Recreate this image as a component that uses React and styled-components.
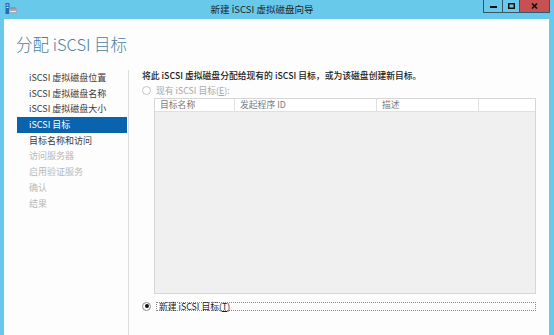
import styled, { createGlobalStyle } from "styled-components";

const GlobalStyle = createGlobalStyle`
  html, body {
    margin: 0;
    padding: 0;
    background: #68c9eb;
  }
  * {
    box-sizing: border-box;
  }
`;

const FONT = `"Noto Sans CJK SC", "Noto Sans", sans-serif`;

const Window = styled.div`
  width: 554px;
  height: 335px;
  background: #68c9eb;
  display: flex;
  flex-direction: column;
  padding: 0 5px 0 4px;
  font-family: ${FONT};
  overflow: hidden;
`;

const TitleBar = styled.div`
  height: 19px;
  display: flex;
  align-items: flex-start;
  flex-shrink: 0;
`;

const AppIcon = styled.svg`
  margin-top: 3px;
  margin-left: 1px;
  flex-shrink: 0;
`;

const Title = styled.div`
  flex: 1;
  text-align: center;
  padding-left: 24px;
  font-size: 9.5px;
  line-height: 19px;
  color: #1f1f1f;
`;

const WindowButtons = styled.div`
  display: flex;
  height: 13px;
  border: 1px solid #35576a;
  border-top: none;
  margin-right: -1px;
`;

const WinButton = styled.div`
  width: ${(p) => p.$w}px;
  height: 100%;
  display: flex;
  align-items: center;
  justify-content: center;
  background: ${(p) => (p.$close ? "#c75050" : "transparent")};
  border-left: ${(p) => (p.$first ? "none" : "1px solid #35576a")};
  color: #111;
`;

const Client = styled.div`
  flex: 1;
  background: #fdfdfd;
  display: flex;
  flex-direction: column;
`;

const Heading = styled.div`
  height: 51px;
  padding: 14px 0 0 12px;
  font-size: 16.5px;
  line-height: 22px;
  color: #4b7fa3;
  font-weight: 300;
`;

const Body = styled.div`
  flex: 1;
  display: flex;
`;

const Nav = styled.div`
  width: 125px;
  padding: 0 1px 0 13px;
  border-right: 1px solid #dcdcdc;
  display: flex;
  flex-direction: column;
`;

const NavItem = styled.div`
  height: 15.7px;
  line-height: 15.7px;
  padding-left: 12px;
  font-size: 9px;
  white-space: nowrap;
  color: ${(p) => (p.$selected ? "#ffffff" : p.$disabled ? "#b8b8b8" : "#3a3a3a")};
  background: ${(p) => (p.$selected ? "#0a63ad" : "transparent")};
`;

const Content = styled.div`
  flex: 1;
  padding: 0 13px 0 13px;
  display: flex;
  flex-direction: column;
`;

const Description = styled.div`
  font-size: 8.8px;
  line-height: 11px;
  color: #1a1a1a;
  font-weight: 500;
`;

const OptionRow = styled.div`
  display: flex;
  align-items: center;
  gap: 5px;
  height: ${(p) => p.$h || 12}px;
  margin-top: ${(p) => p.$mt || 0}px;
  font-size: 8.8px;
  color: ${(p) => (p.$disabled ? "#a8a8a8" : "#1a1a1a")};
`;

const Radio = styled.span`
  width: 9px;
  height: 9px;
  border-radius: 50%;
  border: 1px solid ${(p) => (p.$disabled ? "#c4c4c4" : "#8a8a8a")};
  background: #fff;
  display: flex;
  align-items: center;
  justify-content: center;
  flex-shrink: 0;

  &::after {
    content: "";
    display: ${(p) => (p.$checked ? "block" : "none")};
    width: 4px;
    height: 4px;
    border-radius: 50%;
    background: #111;
  }
`;

const Key = styled.span`
  text-decoration: underline;
`;

const FocusLabel = styled.span`
  flex: 1;
  height: 9px;
  line-height: 8px;
  border: 1px dotted #8a8a8a;
  padding-left: 2px;
`;

const Table = styled.div`
  margin: 2px 0 0 12px;
  height: 196px;
  border: 1px solid #d6d6d6;
  background: #f0f0f0;
  display: flex;
  flex-direction: column;
`;

const HeaderRow = styled.div`
  display: grid;
  grid-template-columns: 79px 142px 102px 1fr;
  height: 13px;
  background: #ffffff;
  border-bottom: 1px solid #e0e0e0;
`;

const HeaderCell = styled.div`
  font-size: 8.8px;
  line-height: 12px;
  color: #7a7a7a;
  padding-left: 5px;
  border-left: ${(p) => (p.$first ? "none" : "1px solid #e0e0e0")};
  white-space: nowrap;
`;

const navItems = [
  { label: "iSCSI 虚拟磁盘位置" },
  { label: "iSCSI 虚拟磁盘名称" },
  { label: "iSCSI 虚拟磁盘大小" },
  { label: "iSCSI 目标", selected: true },
  { label: "目标名称和访问" },
  { label: "访问服务器", disabled: true },
  { label: "启用验证服务", disabled: true },
  { label: "确认", disabled: true },
  { label: "结果", disabled: true },
];

const columns = ["目标名称", "发起程序 ID", "描述", ""];

export default function App() {
  return (
    <>
      <GlobalStyle />
      <Window>
        <TitleBar>
          <AppIcon width="12" height="12" viewBox="0 0 12 12">
            <rect x="0.5" y="0" width="4" height="11" fill="#1d6fc0" />
            <rect x="1.5" y="1.5" width="2" height="1" fill="#d9ecfa" />
            <rect x="1.5" y="4" width="2" height="1" fill="#d9ecfa" />
            <path d="M4 6 L6 4 L10 4 L12 6 Z" fill="#8c96a0" />
            <rect x="4" y="6" width="8" height="5" rx="0.5" fill="#a3acb5" />
            <rect x="5" y="8" width="6" height="1" fill="#e6eaee" />
          </AppIcon>
          <Title>新建 iSCSI 虚拟磁盘向导</Title>
          <WindowButtons>
            <WinButton $w={18} $first>
              <svg width="7" height="3" viewBox="0 0 7 3">
                <rect x="0" y="1" width="7" height="2" fill="#111" />
              </svg>
            </WinButton>
            <WinButton $w={17}>
              <svg width="7" height="6" viewBox="0 0 7 6">
                <rect x="0.75" y="0.75" width="5.5" height="4.5" fill="none" stroke="#111" strokeWidth="1.5" />
              </svg>
            </WinButton>
            <WinButton $w={30} $close>
              <svg width="7" height="6" viewBox="0 0 7 6">
                <path d="M1 0.5 L6 5.5 M6 0.5 L1 5.5" stroke="#111" strokeWidth="1.6" />
              </svg>
            </WinButton>
          </WindowButtons>
        </TitleBar>
        <Client>
          <Heading>分配 iSCSI 目标</Heading>
          <Body>
            <Nav>
              {navItems.map((item) => (
                <NavItem
                  key={item.label}
                  $selected={item.selected}
                  $disabled={item.disabled}
                >
                  {item.label}
                </NavItem>
              ))}
            </Nav>
            <Content>
              <Description>
                将此 iSCSI 虚拟磁盘分配给现有的 iSCSI 目标，或为该磁盘创建新目标。
              </Description>
              <OptionRow $disabled $mt={3}>
                <Radio $disabled />
                <span>
                  现有 iSCSI 目标(<Key>E</Key>):
                </span>
              </OptionRow>
              <Table>
                <HeaderRow>
                  {columns.map((c, i) => (
                    <HeaderCell key={i} $first={i === 0}>
                      {c}
                    </HeaderCell>
                  ))}
                </HeaderRow>
              </Table>
              <OptionRow $mt={6}>
                <Radio $checked />
                <FocusLabel>
                  新建 iSCSI 目标(<Key>T</Key>)
                </FocusLabel>
              </OptionRow>
            </Content>
          </Body>
        </Client>
      </Window>
    </>
  );
}
